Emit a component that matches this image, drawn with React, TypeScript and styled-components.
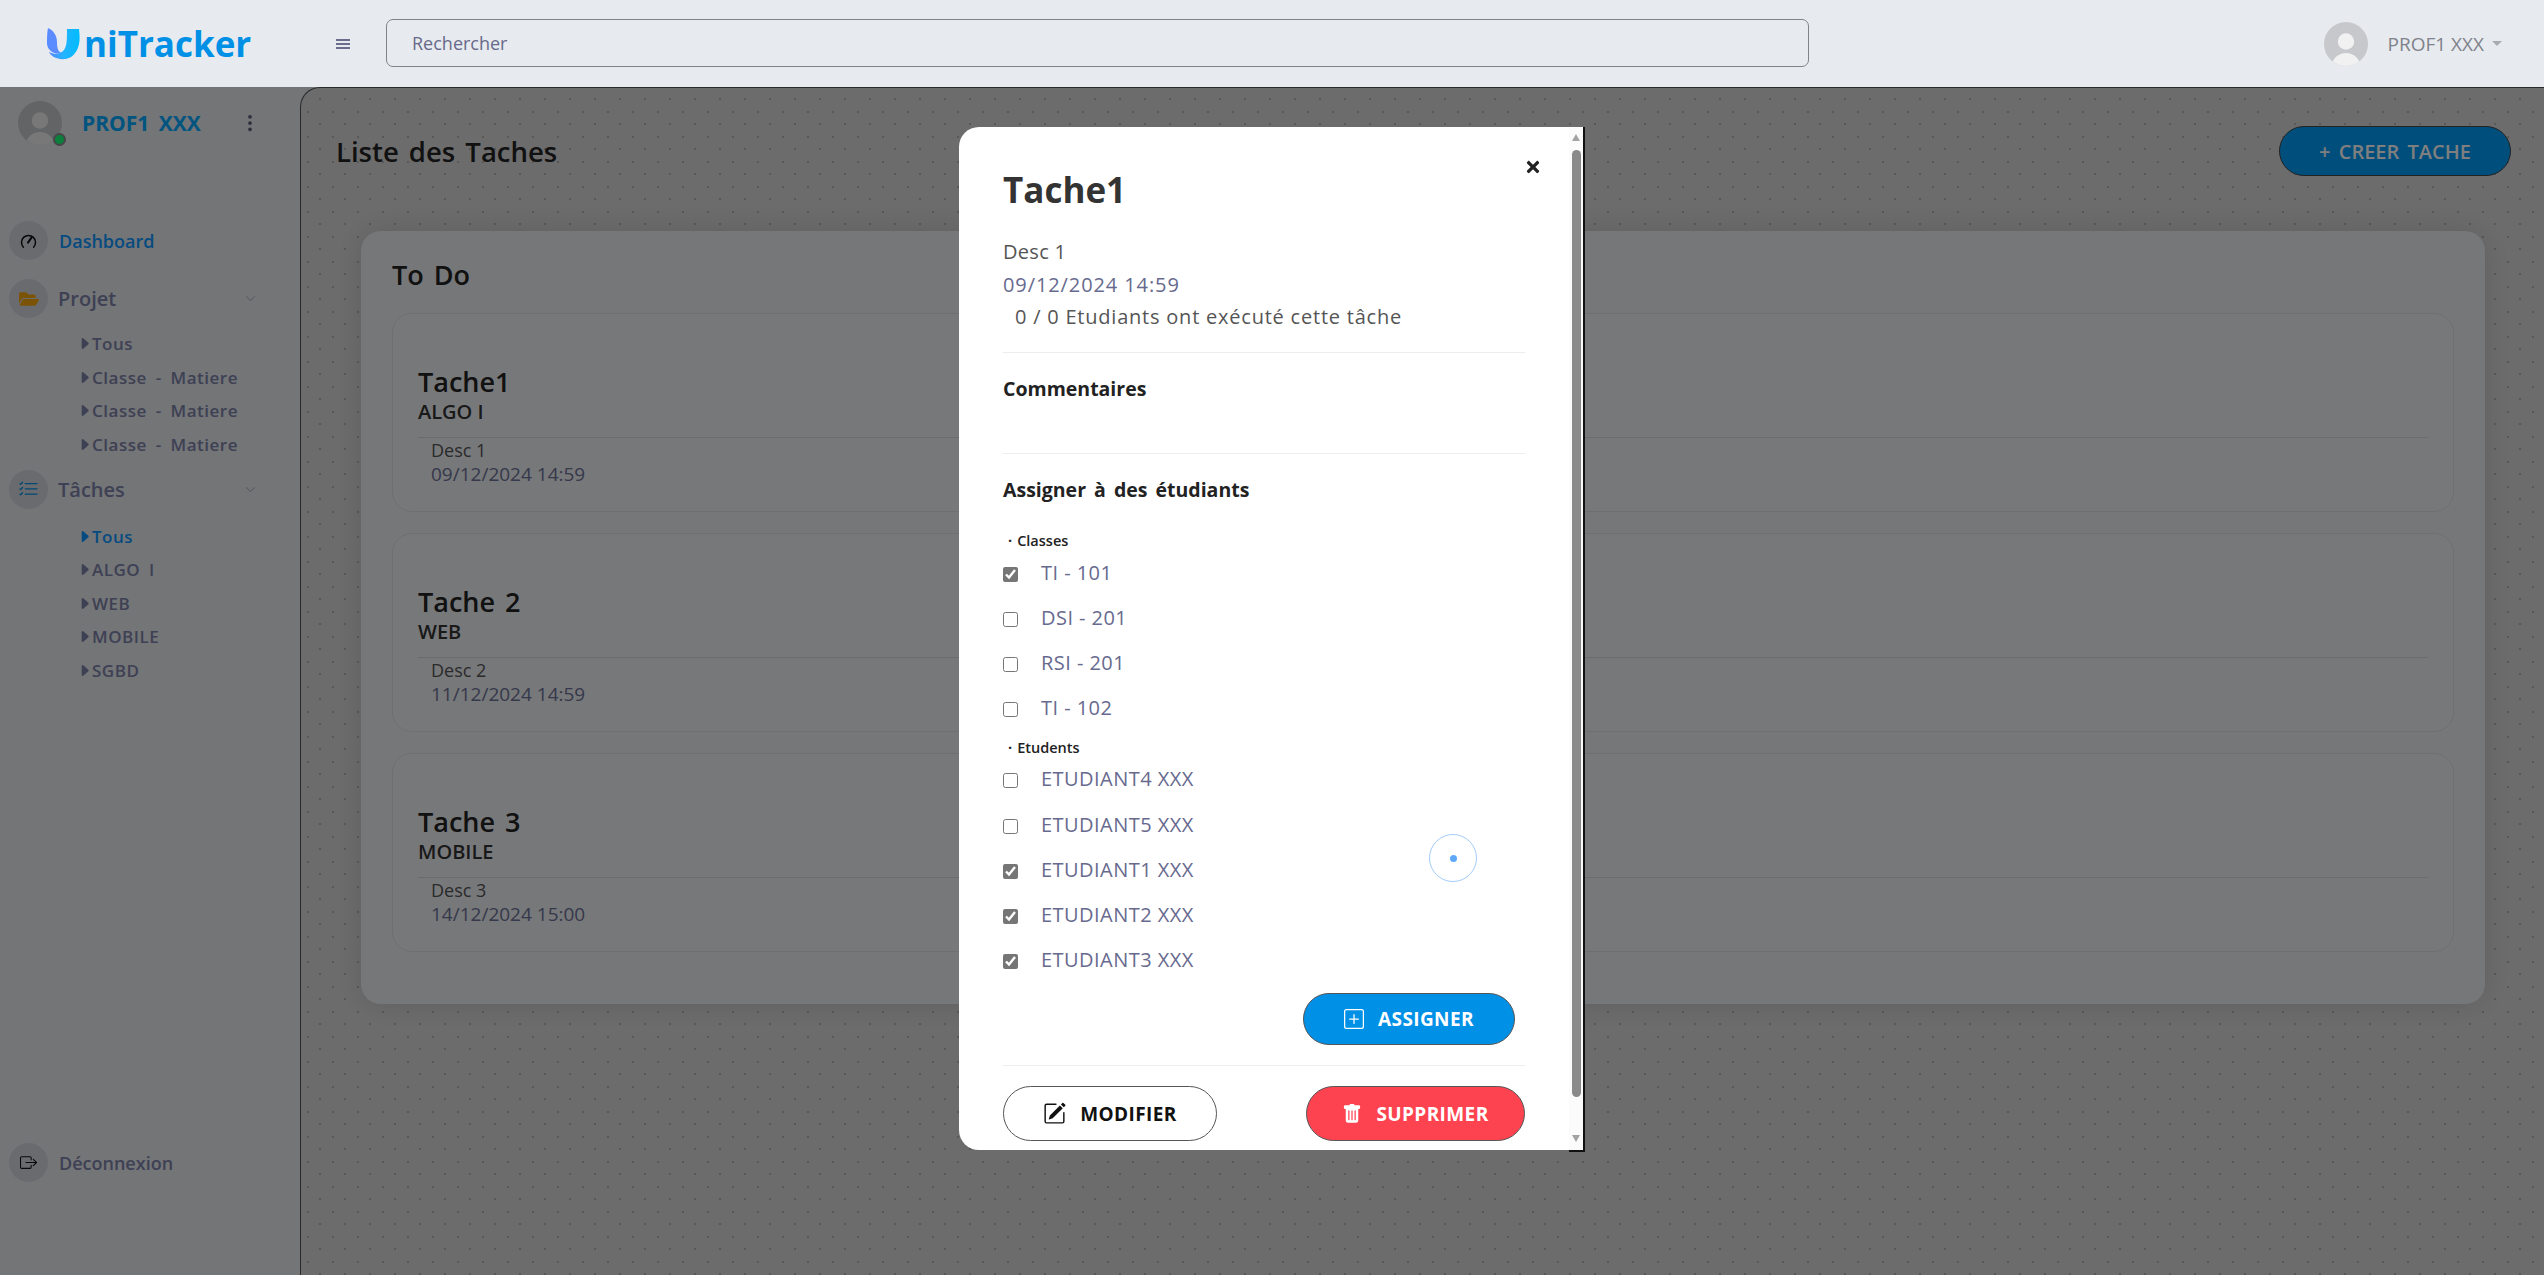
import React from 'react';
import styled, { createGlobalStyle } from 'styled-components';
import {
  BsListCheck, BsBoxArrowRight, BsPencilSquare,
  BsPlusSquare, BsTrashFill, BsThreeDotsVertical, BsCaretRightFill, BsChevronDown,
} from 'react-icons/bs';
import { FaFolderOpen, FaTimes } from 'react-icons/fa';

const Global = createGlobalStyle`
  * { box-sizing: border-box; }
  html, body { margin: 0; height: 100%; overflow: hidden; }
  body { font-family: "Open Sans", "Noto Sans", "DejaVu Sans", sans-serif; color: #222; }
`;

const Page = styled.div`
  width: 2544px; height: 1275px; display: flex; flex-direction: column; background: #e7eaef;
`;
const Header = styled.header`
  height: 87px; flex: none; display: flex; align-items: center; background: #e7eaef;
`;
const Logo = styled.div`
  width: 336px; padding-left: 47px; display: flex; align-items: center;
`;
const LogoText = styled.span`
  font-size: 35px; font-weight: 700; color: #0090e6; margin-left: 3px; line-height: 40px;
`;
const Burger = styled.div`
  width: 14px; height: 10px; margin-right: 36px; display: flex; flex-direction: column; justify-content: space-between;
  & > i { display: block; height: 2px; background: #6a6d8c; }
`;
const Search = styled.div`
  width: 1423px; height: 48px; margin-bottom: 1px; border: 1px solid #808388; border-radius: 7px; padding-left: 25px;
  display: flex; align-items: center; font-size: 18px; color: #676a8a;
`;
const UserBox = styled.div`
  margin-left: auto; padding-right: 42px; display: flex; align-items: center;
  font-size: 19px; color: #7f828a;
`;
const Caret = styled.i`
  width: 0; height: 0; margin-left: 8px; border: 5px solid transparent; border-top: 5px solid #a9abb2; border-bottom: 0;
`;
const UserAvatar = styled.div`
  position: relative; width: ${p => p.$size}px; height: ${p => p.$size}px; margin-right: 20px; flex: none;
`;
const Online = styled.i`
  position: absolute; right: -4px; bottom: -1px; width: 13px; height: 13px; border-radius: 50%;
  background: #18ff78; border: 2px solid #8c8e90;
`;
const Body = styled.div`
  position: relative; flex: 1; display: flex; min-height: 0;
`;
const Sidebar = styled.aside`
  width: 300px; flex: none; display: flex; flex-direction: column; padding-bottom: 6px; background: #e7eaef;
`;
const Profile = styled.div`
  display: flex; align-items: flex-start; padding: 14px 0 0 18px; height: 134px;
`;
const ProfileName = styled.div`
  font-size: 21px; font-weight: 700; color: #00a8ff; margin-top: 8px; width: 158px; word-spacing: 4px;
`;
const Kebab = styled.div`
  font-size: 20px; color: #5b5e78; margin-top: 11px;
`;
const NavRow = styled.div`
  display: flex; align-items: center; height: 39px; margin: ${p => p.$m || '0'}; padding-left: 9px; padding-right: 44px;
`;
const NavIcon = styled.span`
  width: 39px; height: 39px; border-radius: 50%; background: #d5d7df; flex: none;
  display: flex; align-items: center; justify-content: center; font-size: ${p => p.$s || 17}px; color: ${p => p.$c};
`;
const NavText = styled.span`
  margin-left: ${p => p.$ml || 11}px; font-size: ${p => p.$s || 19}px; font-weight: 600; color: ${p => p.$c || '#7d81a8'};
`;
const Chevron = styled.span`
  margin-left: auto; color: #a6a9b5; font-size: 11px; display: flex;
`;
const SubList = styled.div`
  margin: ${p => p.$m}; display: flex; flex-direction: column;
`;
const SubItem = styled.div`
  height: 33.6px; padding-left: 77px; display: flex; align-items: center; gap: 0;
  font-size: 17px; font-weight: 600; color: ${p => p.$active ? '#0d96ff' : '#7d81a8'}; letter-spacing: .5px; word-spacing: 4px;
  & svg { font-size: 15px; flex: none; }
`;
const Logout = styled(NavRow)`
  margin-top: auto; margin-bottom: 87px;
`;
const Main = styled.main`
  flex: 1; min-width: 0; padding: 38px 33px 0 35px; background-color: #d9d9d9;
  background-image: radial-gradient(circle at 1px 1px, #b0b0b0 .7px, transparent 1px), radial-gradient(circle at 1px 1px, #b0b0b0 .7px, transparent 1px);
  background-size: 25px 25px; background-position: 6px 23px, 18px 10px;
  border-left: 1px solid #555; border-top: 1px solid #555; border-top-left-radius: 20px;
`;
const TitleRow = styled.div`
  display: flex; align-items: center; justify-content: space-between; height: 50px;
`;
const PageTitle = styled.h1`
  margin: 0; font-size: 27.5px; font-weight: 600; color: #222; word-spacing: 3px;
`;
const CreateBtn = styled.button`
  width: 232px; height: 50px; border-radius: 25px; border: 1px solid #444; background: #009cf7; color: #fff;
  font: 600 20px "Open Sans", sans-serif; word-spacing: 3px;
`;
const Board = styled.section`
  margin: 55px 26px 0 25px; padding: 24px 31px 52px 31px; border-radius: 20px; background: #eceef2;
  box-shadow: 0 0 30px rgba(0,0,0,.12);
`;
const BoardTitle = styled.h2`
  margin: 0 0 18px; font-size: 27px; line-height: 40px; font-weight: 600; color: #222; word-spacing: 3px;
`;
const TaskList = styled.div`
  display: flex; flex-direction: column; gap: 21px;
`;
const TaskCard = styled.article`
  height: 199px; padding: 50px 25px 0; border: 1px solid #dfdfe2; border-radius: 20px; background: #eff1f5;
`;
const TaskName = styled.div`
  font-size: 27px; line-height: 36px; font-weight: 600; color: #222; word-spacing: 3px;
`;
const TaskClass = styled.div`
  font-size: 20px; line-height: 24px; font-weight: 600; color: #333; padding-bottom: 13px; border-bottom: 1px solid #d8d9dc;
`;
const TaskDesc = styled.div`
  padding-left: 13px; font-size: 18px; line-height: 24px; color: #555;
`;
const TaskDate = styled.div`
  padding-left: 13px; font-size: 19px; line-height: 24px; color: #6c7096;
`;
const Overlay = styled.div`
  position: absolute; inset: 0; background: rgba(0,0,0,.5);
`;
const Modal = styled.div`
  position: absolute; left: 959px; top: 40px; width: 626px; height: 1023px; display: flex;
  background: #fff; border-radius: 20px 0 0 20px;
`;
const ModalBody = styled.div`
  position: relative; width: 610px; flex: none; padding: 41px 44px 0;
`;
const ModalTitle = styled.h3`
  margin: 0 0 24px; font-size: 35px; line-height: 44px; font-weight: 700; color: #333;
`;
const Close = styled.span`
  position: absolute; top: 31px; right: 27px; font-size: 18px; color: #222; display: flex;
`;
const Line = styled.div`
  font-size: ${p => p.$s || 20}px; line-height: 32.5px; color: ${p => p.$c || '#555'};
  padding-left: ${p => p.$pl || 0}px; letter-spacing: ${p => p.$ls || 0}px;
`;
const Rule = styled.hr`
  border: 0; border-top: 1px solid #ededed; margin: ${p => p.$m};
`;
const SectionTitle = styled.h4`
  margin: 0; font-size: 19.5px; line-height: 30px; font-weight: 700; color: #222; word-spacing: 3px;
`;
const GroupLabel = styled.div`
  font-size: 14.5px; line-height: 20px; font-weight: 600; color: #222; padding-left: 5px; margin: ${p => p.$m};
  &::before { content: '·'; font-weight: 700; margin-right: 5px; }
`;
const CheckRow = styled.label`
  height: 45.2px; display: flex; align-items: center; font-size: 20px; color: #676a8e; line-height: 26px; letter-spacing: .45px;
`;
const Check = styled.input`
  width: 15px; height: 15px; margin: 3px 23px 0 0; accent-color: #767676;
`;
const AssignRow = styled.div`
  display: flex; justify-content: flex-end; padding-right: 10px; margin-top: 10.5px;
`;
const Pill = styled.button`
  height: ${p => p.$h}px; width: ${p => p.$w}px; border-radius: 28px; border: 1px solid ${p => p.$border};
  background: ${p => p.$bg}; color: ${p => p.$fg}; font: 700 19px "Open Sans", sans-serif; letter-spacing: .4px;
  display: flex; align-items: center; justify-content: center; gap: 14px;
  & svg { font-size: ${p => p.$icon || 20}px; flex: none; }
`;
const Footer = styled.div`
  display: flex; justify-content: space-between;
`;
const Ripple = styled.span`
  position: absolute; left: 470px; top: 707px; width: 48px; height: 48px; border-radius: 50%;
  border: 1px solid #a3cdfb; display: flex; align-items: center; justify-content: center;
  &::after { content: ''; width: 7px; height: 7px; border-radius: 50%; background: #5ea8f7; }
`;
const ScrollTrack = styled.div`
  position: relative; width: 16px; flex: none; display: flex; flex-direction: column; align-items: center; background: #fbfbfb;
  border-right: 2px solid #111; padding-top: 7px;
  &::after { content: ''; position: absolute; left: 0; right: -2px; bottom: -2px; height: 2px; background: #111; }
`;
const Arrow = styled.i`
  width: 0; height: 0; border-left: 4.5px solid transparent; border-right: 4.5px solid transparent;
  border-${p => p.$dir === 'up' ? 'bottom' : 'top'}: 7px solid #a3a3a3;
  margin: ${p => p.$m};
`;
const Thumb = styled.div`
  width: 9px; height: 947px; border-radius: 5px; background: #8a8a8a;
`;

function Avatar({ size }: { size: number }) {
  return (
    <svg width={size} height={size} viewBox="0 0 44 44">
      <defs><clipPath id={`av${size}`}><circle cx="22" cy="22" r="22" /></clipPath></defs>
      <circle cx="22" cy="22" r="22" fill="#c6c8cc" />
      <g clipPath={`url(#av${size})`} fill="#f1f1f1">
        <circle cx="22" cy="19.5" r="8.2" />
        <ellipse cx="22" cy="44" rx="14" ry="13" />
      </g>
    </svg>
  );
}

function LogoMark() {
  return (
    <svg width="34" height="33" viewBox="0 0 34 33">
      <defs>
        <linearGradient id="lg" x1="0" y1="0" x2="1" y2="0">
          <stop offset="0" stopColor="#5a8cff" />
          <stop offset=".5" stopColor="#22b4ff" />
          <stop offset="1" stopColor="#00bcff" />
        </linearGradient>
      </defs>
      <path d="M1 1c5 2 9 7 9 14 0 6 1 10 5 11-6 2-14-1-15-9C0 11 0 6 1 1Z" fill="#5a8cff" />
      <path d="M2 25c6 3 12 2 15-2 3-4 3-11 3-21h12c1 9 1 15-2 21-4 8-11 10-17 9-5-1-9-3-11-7Z" fill="url(#lg)" />
    </svg>
  );
}

function GaugeIcon() {
  return (
    <svg width="17" height="16" viewBox="0 0 17 16" fill="none" stroke="currentColor">
      <path d="M3.4 14.2A7 7 0 1 1 13.6 14.2" strokeWidth="1.5" strokeLinecap="round" />
      <path d="M8 9.6 11.6 4.4" strokeWidth="2" strokeLinecap="round" />
    </svg>
  );
}

const projects = ['Tous', 'Classe - Matiere', 'Classe - Matiere', 'Classe - Matiere'];
const topics = ['Tous', 'ALGO I', 'WEB', 'MOBILE', 'SGBD'];
const tasks = [
  { name: 'Tache1', cls: 'ALGO I', desc: 'Desc 1', date: '09/12/2024 14:59' },
  { name: 'Tache 2', cls: 'WEB', desc: 'Desc 2', date: '11/12/2024 14:59' },
  { name: 'Tache 3', cls: 'MOBILE', desc: 'Desc 3', date: '14/12/2024 15:00' },
];
const classes = [['TI - 101', true], ['DSI - 201', false], ['RSI - 201', false], ['TI - 102', false]] as const;
const students = [
  ['ETUDIANT4 XXX', false], ['ETUDIANT5 XXX', false], ['ETUDIANT1 XXX', true],
  ['ETUDIANT2 XXX', true], ['ETUDIANT3 XXX', true],
] as const;

export default function App() {
  return (
    <Page>
      <Global />
      <Header>
        <Logo><LogoMark /><LogoText>niTracker</LogoText></Logo>
        <Burger><i /><i /><i /></Burger>
        <Search>Rechercher</Search>
        <UserBox>
          <UserAvatar $size={44}><Avatar size={44} /></UserAvatar>
          PROF1 XXX<Caret />
        </UserBox>
      </Header>
      <Body>
        <Sidebar>
          <Profile>
            <UserAvatar $size={44}><Avatar size={44} /><Online /></UserAvatar>
            <ProfileName>PROF1 XXX</ProfileName>
            <Kebab><BsThreeDotsVertical /></Kebab>
          </Profile>
          <NavRow>
            <NavIcon $c="#111"><GaugeIcon /></NavIcon>
            <NavText $c="#0d96ff" $s={18}>Dashboard</NavText>
          </NavRow>
          <NavRow $m="19px 0 0">
            <NavIcon $c="#f5a70a" $s={20}><FaFolderOpen /></NavIcon>
            <NavText $s={20} $ml={10}>Projet</NavText>
            <Chevron><BsChevronDown /></Chevron>
          </NavRow>
          <SubList $m="9px 0 9px">
            {projects.map((t, i) => <SubItem key={i}><BsCaretRightFill />{t}</SubItem>)}
          </SubList>
          <NavRow>
            <NavIcon $c="#0090e6" $s={21}><BsListCheck /></NavIcon>
            <NavText $s={20} $ml={10}>Tâches</NavText>
            <Chevron><BsChevronDown /></Chevron>
          </NavRow>
          <SubList $m="10px 0 0">
            {topics.map((t, i) => <SubItem key={i} $active={i === 0}><BsCaretRightFill />{t}</SubItem>)}
          </SubList>
          <Logout>
            <NavIcon $c="#111"><BsBoxArrowRight /></NavIcon>
            <NavText $s={18}>Déconnexion</NavText>
          </Logout>
        </Sidebar>
        <Main>
          <TitleRow>
            <PageTitle>Liste des Taches</PageTitle>
            <CreateBtn>+ CREER TACHE</CreateBtn>
          </TitleRow>
          <Board>
            <BoardTitle>To Do</BoardTitle>
            <TaskList>
              {tasks.map(t => (
                <TaskCard key={t.name}>
                  <TaskName>{t.name}</TaskName>
                  <TaskClass>{t.cls}</TaskClass>
                  <TaskDesc>{t.desc}</TaskDesc>
                  <TaskDate>{t.date}</TaskDate>
                </TaskCard>
              ))}
            </TaskList>
          </Board>
        </Main>
        <Overlay />
        <Modal>
          <ModalBody>
            <Close><FaTimes /></Close>
            <ModalTitle>Tache1</ModalTitle>
            <Line $ls={.3}>Desc 1</Line>
            <Line $c="#676a8e" $ls={.9}>09/12/2024 14:59</Line>
            <Line $pl={12} $ls={.78}>0 / 0 Etudiants ont exécuté cette tâche</Line>
            <Rule $m="18px 0 21px" />
            <SectionTitle>Commentaires</SectionTitle>
            <Rule $m="49px 0 21px" />
            <SectionTitle>Assigner à des étudiants</SectionTitle>
            <GroupLabel $m="26px 0 -.5px">Classes</GroupLabel>
            {classes.map(([n, c]) => (
              <CheckRow key={n}><Check type="checkbox" defaultChecked={c} />{n}</CheckRow>
            ))}
            <GroupLabel $m="7px 0 -1px">Etudents</GroupLabel>
            {students.map(([n, c]) => (
              <CheckRow key={n}><Check type="checkbox" defaultChecked={c} />{n}</CheckRow>
            ))}
            <AssignRow>
              <Pill $w={212} $h={52} $bg="#0090e6" $fg="#fff" $border="#555"><BsPlusSquare />ASSIGNER</Pill>
            </AssignRow>
            <Rule $m="20px 0 20px" />
            <Footer>
              <Pill $w={214} $h={55} $bg="#fff" $fg="#111" $border="#555" $icon={23}><BsPencilSquare />MODIFIER</Pill>
              <Pill $w={219} $h={55} $bg="#fe4350" $fg="#fff" $border="#555"><BsTrashFill />SUPPRIMER</Pill>
            </Footer>
            <Ripple />
          </ModalBody>
          <ScrollTrack>
            <Arrow $dir="up" $m="0 0 9px" />
            <Thumb />
            <Arrow $dir="down" $m="38px 0 0" />
          </ScrollTrack>
        </Modal>
      </Body>
    </Page>
  );
}
